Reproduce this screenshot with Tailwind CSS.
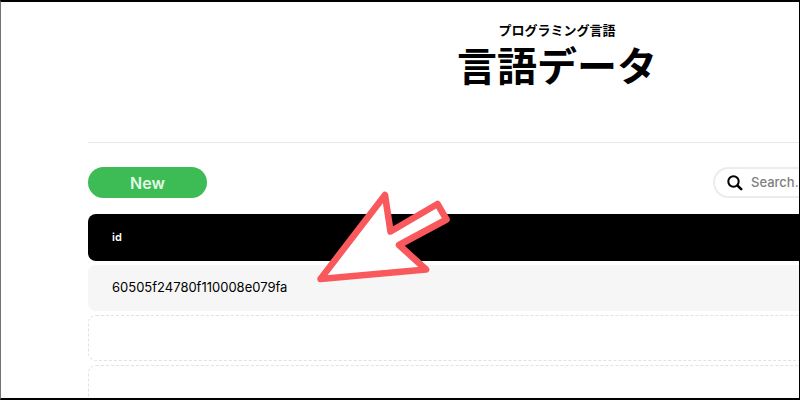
<!DOCTYPE html>
<html lang="ja">
<head>
    <meta charset="UTF-8">
    <meta name="viewport" content="width=device-width, initial-scale=1.0">
    <title>言語データ</title>
    <script src="https://cdn.jsdelivr.net/npm/@tailwindcss/browser@4"></script>
</head>
<body class="bg-white text-black font-['Inter','Noto_Sans_CJK_JP',sans-serif]">
    <div class="relative h-screen overflow-hidden border-t-2 border-b-2 border-l border-r border-black border-l-neutral-500">
        <!-- Content runs past the right edge of the frame -->
        <div class="pl-[87px] -mr-[227px]">
            <!-- Header -->
            <header class="pt-[18px] pb-[54px] text-center border-b border-gray-200 font-['Noto_Sans_CJK_JP',sans-serif] font-bold">
                <p class="text-[13px] leading-5">プログラミング言語</p>
                <h1 class="text-[40px] leading-12">言語データ</h1>
            </header>

            <!-- Toolbar -->
            <div class="flex items-center justify-between pt-6 pb-3">
                <button type="button" class="h-[31px] w-[119px] rounded-full bg-[#3dbb54] text-base font-semibold text-[#e3fbe6]">New</button>
                <label class="flex h-[31px] w-[313px] items-center gap-2 rounded-full border-2 border-[#ececec] px-3">
                    <svg class="h-4 w-4 shrink-0" viewBox="0 0 16 16" fill="none" stroke="black" stroke-width="2" stroke-linecap="round">
                        <circle cx="6.5" cy="6.5" r="5.2" />
                        <path d="M10.8 10.8L14.2 14.2" stroke-width="2.6" />
                    </svg>
                    <input type="search" aria-label="Search" placeholder="Search..." class="min-w-0 flex-1 text-[13px] font-medium outline-none placeholder:text-[#808080]">
                </label>
            </div>

            <!-- Data table -->
            <table class="w-full border-separate border-spacing-x-0 border-spacing-y-1 text-left">
                <thead>
                    <tr>
                        <th class="h-[47px] rounded-lg bg-black px-6 text-[11px] font-semibold text-white">id</th>
                    </tr>
                </thead>
                <tbody class="text-[13px]">
                    <tr>
                        <td class="h-[46px] rounded-lg bg-[#f6f6f6] px-6">60505f24780f110008e079fa</td>
                    </tr>
                    <tr>
                        <td class="h-[46px] rounded-lg border border-dashed border-[#e2e2e2] px-6"></td>
                    </tr>
                    <tr>
                        <td class="h-[46px] rounded-lg border border-dashed border-[#e2e2e2] px-6"></td>
                    </tr>
                </tbody>
            </table>
        </div>

        <!-- Arrow pointing at the record -->
        <svg class="absolute left-[315px] top-[186px] h-[100px] w-[140px]" viewBox="316 188 140 100" fill="white" stroke="#f9595c" stroke-width="6.6" stroke-linejoin="round" aria-hidden="true">
            <path d="M320.5 279L385 195L390.5 231.5L437.5 204L446.5 219.5L399 245L426 269.5Z" />
        </svg>
    </div>
</body>
</html>
